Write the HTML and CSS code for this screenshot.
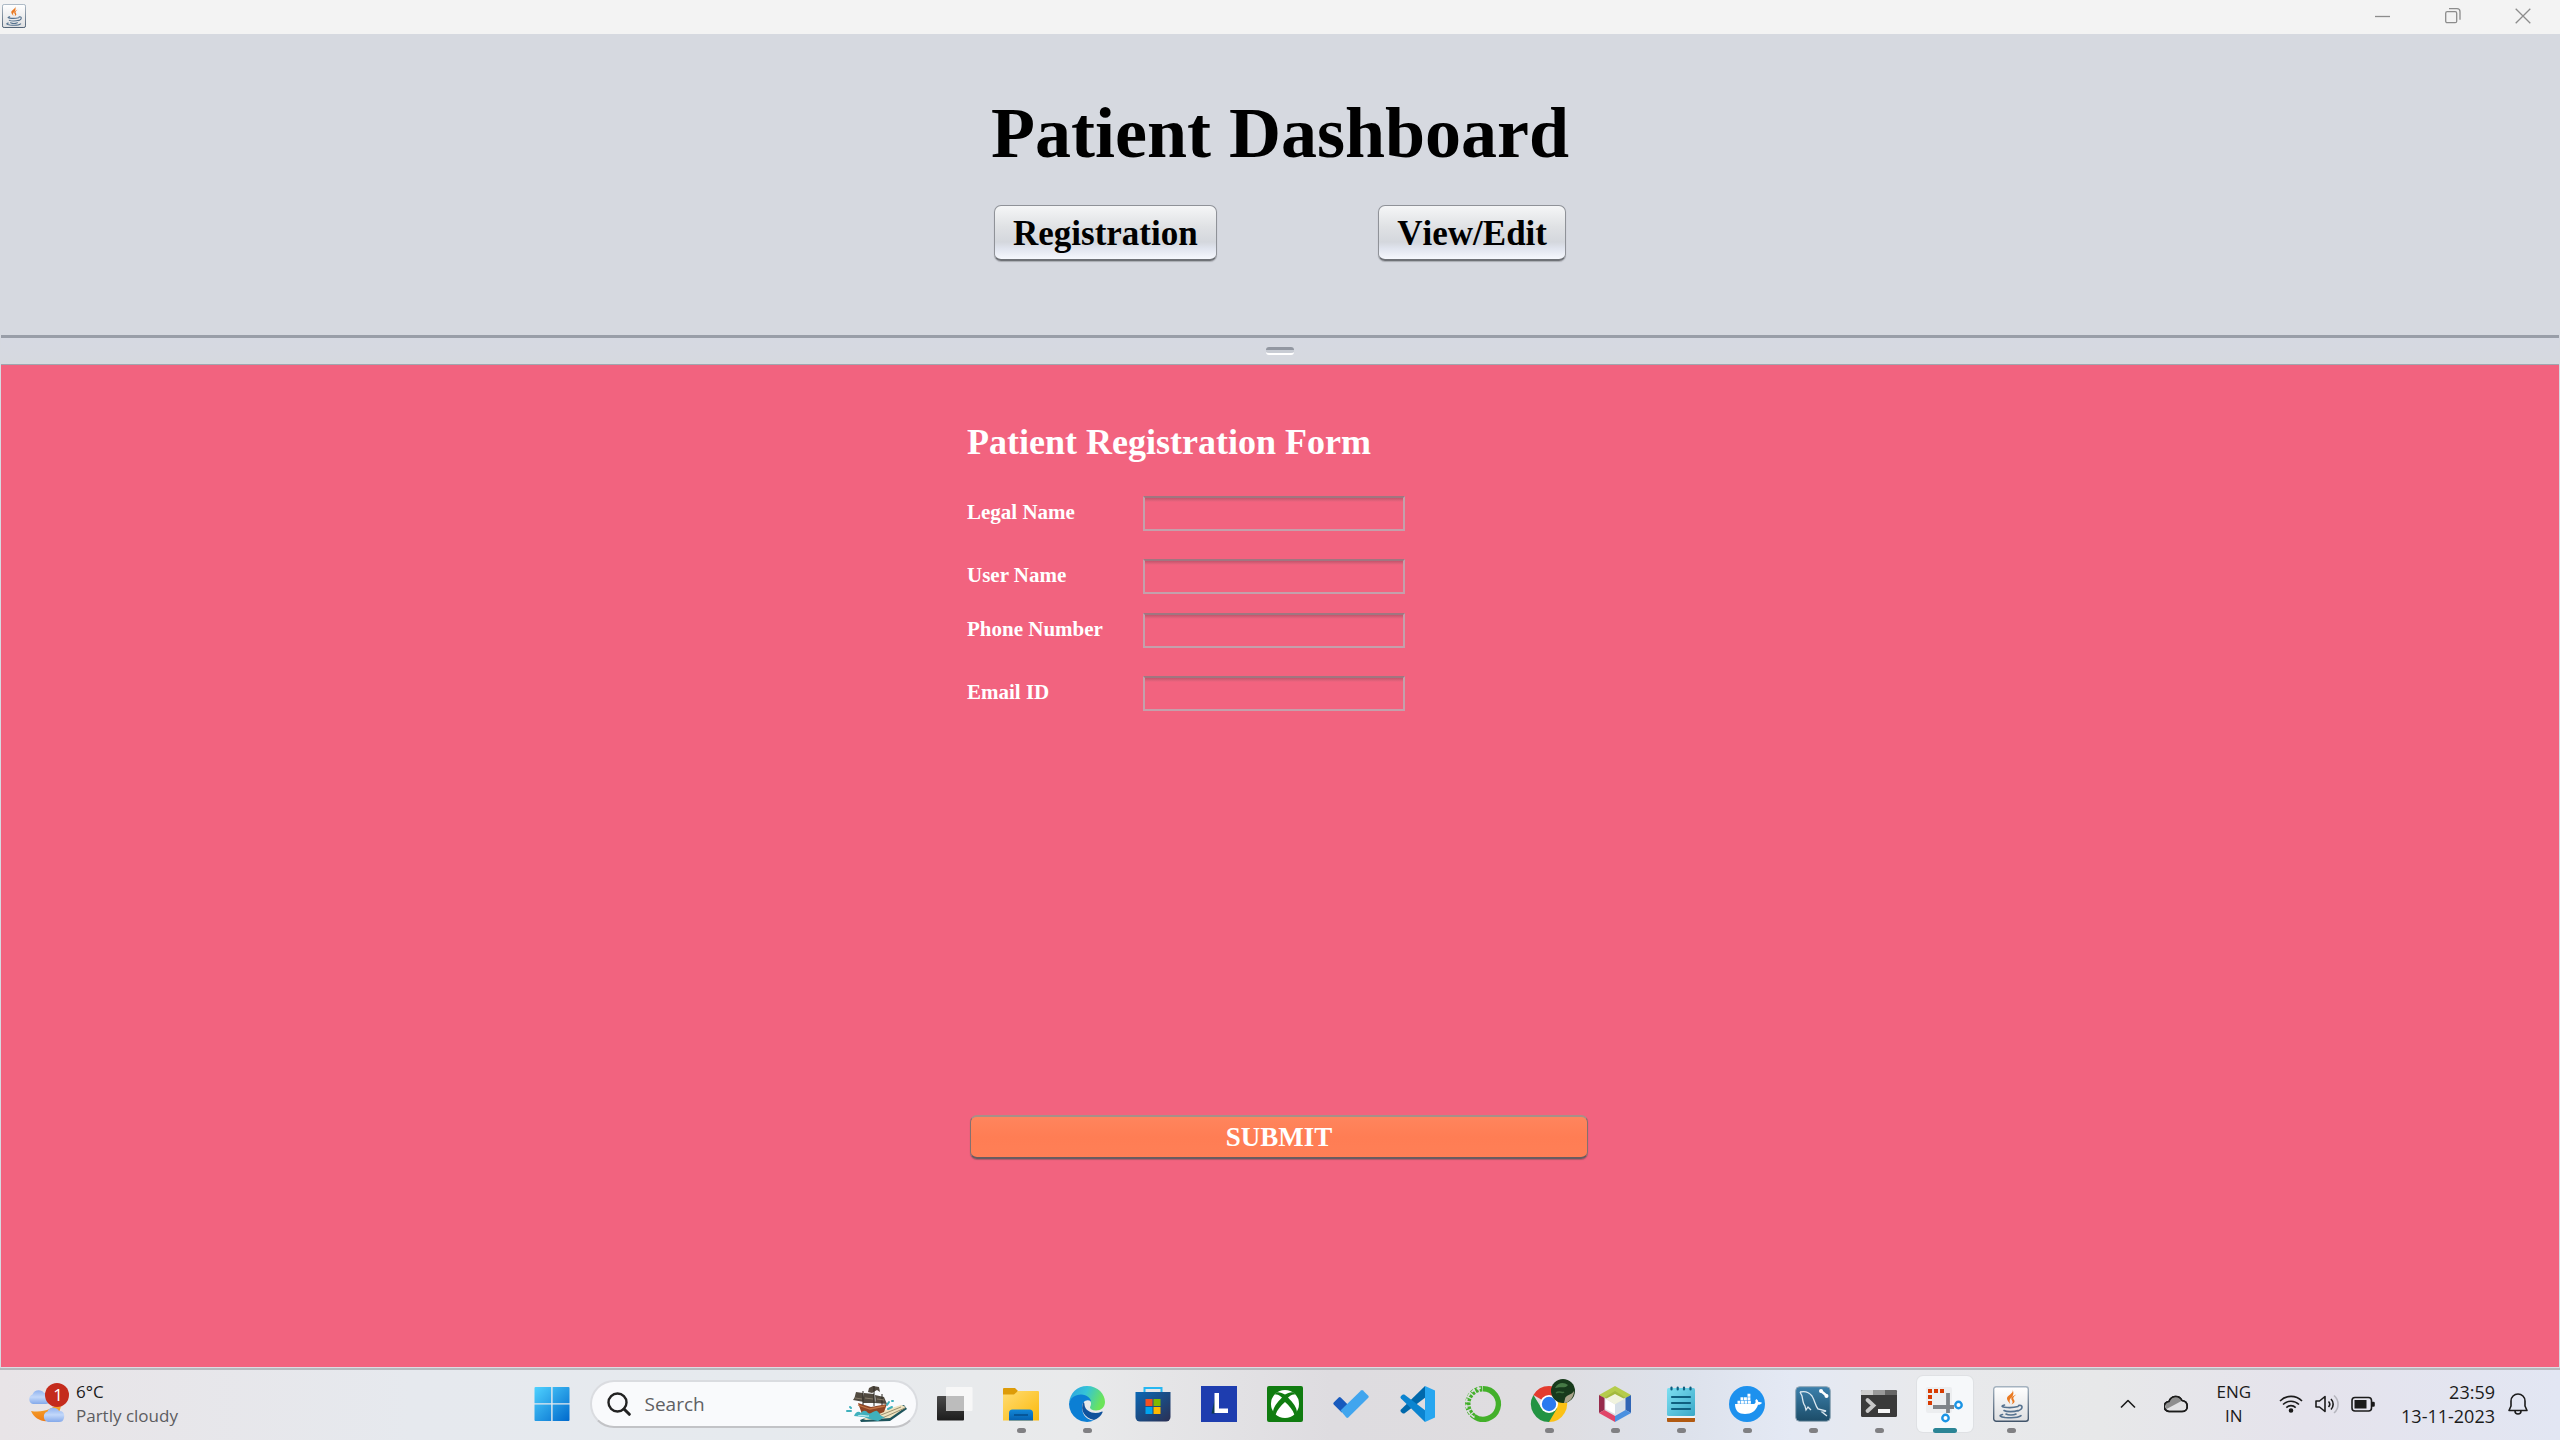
FILE: index.html
```html
<!DOCTYPE html>
<html lang="en">
<head>
<meta charset="utf-8">
<title>Patient Dashboard</title>
<link rel="stylesheet" href="styles.css">
</head>
<body>
<svg width="0" height="0" class="defs" aria-hidden="true">
  <defs>
    <linearGradient id="g-win" x1="0" y1="0" x2="1" y2="1"><stop offset="0" stop-color="#4fd2ff"/><stop offset="1" stop-color="#0069cc"/></linearGradient>
    <linearGradient id="g-dark" x1="0" y1="0" x2="0" y2="1"><stop offset="0" stop-color="#4a4a4a"/><stop offset="1" stop-color="#1c1c1c"/></linearGradient>
    <linearGradient id="g-folder" x1="0" y1="0" x2="1" y2="1"><stop offset="0" stop-color="#ffdc72"/><stop offset="1" stop-color="#fbb90c"/></linearGradient>
    <linearGradient id="g-blue" x1="0" y1="0" x2="0" y2="1"><stop offset="0" stop-color="#1288d8"/><stop offset="1" stop-color="#0661b0"/></linearGradient>
    <linearGradient id="g-edge" x1="0" y1="0" x2="1" y2="0.3"><stop offset="0" stop-color="#2b9fe0"/><stop offset="0.5" stop-color="#35c4d8"/><stop offset="1" stop-color="#6be45a"/></linearGradient>
    <linearGradient id="g-store" x1="0" y1="0" x2="1" y2="1"><stop offset="0" stop-color="#0b68b5"/><stop offset="1" stop-color="#2b2f52"/></linearGradient>
    <linearGradient id="g-cloud" x1="0" y1="0" x2="0" y2="1"><stop offset="0" stop-color="#8fb2ef"/><stop offset="0.5" stop-color="#c3d8fa"/><stop offset="1" stop-color="#84a9ea"/></linearGradient>
    <linearGradient id="g-moon" x1="0" y1="0" x2="0" y2="1"><stop offset="0" stop-color="#f8b432"/><stop offset="1" stop-color="#ee7c18"/></linearGradient>
    <linearGradient id="g-note" x1="0" y1="0" x2="1" y2="1"><stop offset="0" stop-color="#7ee0f2"/><stop offset="1" stop-color="#3aa8c8"/></linearGradient>
    <linearGradient id="g-sql" x1="0" y1="0" x2="0" y2="1"><stop offset="0" stop-color="#3c80ac"/><stop offset="1" stop-color="#1c4c68"/></linearGradient>
    <linearGradient id="g-tile" x1="0" y1="0" x2="0" y2="1"><stop offset="0" stop-color="#ffffff"/><stop offset="1" stop-color="#dedfe1"/></linearGradient>
    <linearGradient id="g-frame" x1="0" y1="0" x2="0" y2="1"><stop offset="0" stop-color="#a5b3c0"/><stop offset="1" stop-color="#42556b"/></linearGradient>
    <symbol id="java" viewBox="0 0 36 36">
      <rect x="0.7" y="0.7" width="34.6" height="34.6" rx="2.5" fill="url(#g-tile)" stroke="url(#g-frame)" stroke-width="1.4"/>
      <path d="M19.5 3.5c2 4-6.500 6-5.500 9.500.4 1.800 2 3 3.200 5-1-3.500-.8-4.500 1.300-6.500 2.200-2.200 2.500-5 1-8zM23.300 8.500c-3.500 1.300-6.300 3.500-4.300 6 .9 1.300.8 2.500-.6 4 3.500-1.500 3.800-3.200 2.300-5-1.200-1.700.3-3.300 2.600-5z" fill="#ea7a22"/>
      <path d="M11.500 19c-3 .8-3.500 1.700 0 2.200 4 .6 10 .3 13.500-.7M11 24.500c2.500 1.500 10 1.500 14 0M13 28c2.500 1.300 7.500 1.200 10 0M25.500 19.500c4-1 5.500 3-.5 5.500M9.500 28.500c-4.500 1-2 2.500 2.500 3 6 .5 13.500.2 16-1.800" fill="none" stroke="#55728f" stroke-width="1.600" stroke-linecap="round"/>
    </symbol>
  </defs>
</svg>

<header class="titlebar">
  <svg class="app-icon" viewBox="0 0 36 36"><use href="#java"/></svg>
  <div class="window-controls">
    <button type="button" aria-label="Minimize"><svg viewBox="0 0 16 16"><path d="M0 8.500h15"/></svg></button>
    <button type="button" aria-label="Restore"><svg viewBox="0 0 16 16"><rect x="0.700" y="3.700" width="11" height="11" rx="1.500"/><path d="M4 .7h8a3 3 0 0 1 3 3v8"/></svg></button>
    <button type="button" aria-label="Close"><svg viewBox="0 0 16 16"><path d="M.7.7l14.600 14.600M15.300.7L.7 15.300"/></svg></button>
  </div>
</header>

<main class="split-pane">
  <section class="dashboard">
    <h1>Patient Dashboard</h1>
    <nav class="actions">
      <button type="button" class="metal">Registration</button>
      <button type="button" class="metal">View/Edit</button>
    </nav>
  </section>
  <div class="divider"><span class="grip"></span></div>
  <section class="registration">
    <form class="form">
      <h2>Patient Registration Form</h2>
      <div class="group">
        <div class="row"><label for="legal">Legal Name</label><input id="legal" type="text"></div>
        <div class="row"><label for="user">User Name</label><input id="user" type="text"></div>
      </div>
      <div class="group">
        <div class="row"><label for="phone">Phone Number</label><input id="phone" type="text"></div>
        <div class="row"><label for="email">Email ID</label><input id="email" type="text"></div>
      </div>
      <button type="button" class="submit">SUBMIT</button>
    </form>
  </section>
</main>

<footer class="taskbar">
  <div class="weather">
    <svg class="weather-icon" viewBox="0 0 42 42">
      <path d="M33 18c1 9-4 17-13 20-7 1-14-3-17-10 12 2 22-2 30-10z" fill="url(#g-moon)"/>
      <path d="M5 21a5 5 0 0 1-.5-9.500C6 6 14 6 16 10c5 0 8 4 6 8-1 2-2 3-4 3z" fill="url(#g-cloud)"/>
      <path d="M20 39a5.500 5.500 0 0 1-.5-10.500C21 23 30 24 31 28c4-.5 6 3 5 7-1 3-2 4-5 4z" fill="url(#g-cloud)"/>
      <circle cx="29" cy="12" r="12" fill="#c42b1c"/>
      <text x="30" y="18" class="badge">1</text>
    </svg>
    <div class="lines"><span>6°C</span><span class="muted">Partly cloudy</span></div>
  </div>

  <div class="apps">
    <button class="app" aria-label="Start"><svg viewBox="0 0 36 36"><path fill="url(#g-win)" d="M1.500 1H17.200V17.200H.5V2a1 1 0 0 1 1-1zM18.600 1H34.500a1 1 0 0 1 1 1V17.200H18.600zM.5 18.600H17.200V35H1.500a1 1 0 0 1-1-1zM18.600 18.600H35.500V34a1 1 0 0 1-1 1H18.600z"/></svg></button>
    <div class="search">
      <svg class="lens" viewBox="0 0 24 24"><circle cx="10.500" cy="10.500" r="9" fill="none" stroke="#222" stroke-width="2.400"/><path d="M17 17l5.300 5.300" stroke="#222" stroke-width="3" stroke-linecap="round"/></svg>
      <input type="search" placeholder="Search" aria-label="Search">
      <svg class="ship" viewBox="0 0 62 38">
        <path d="M14 35l20-8 24-7 3 4-17 12-29 1z" fill="#1e545c"/>
        <path d="M17 34l22-9 16-5 5 2-16 11-24 2z" fill="#efe3c0"/>
        <path d="M30 32l25-10M34 34l25-11" stroke="#9a9070" stroke-width="1"/>
        <path d="M12 18l13 4 16-3-3 8-10 4-12-2z" fill="#8f4525"/>
        <path d="M12 20l12 4 15-3" stroke="#c27545" stroke-width="1.300" fill="none"/>
        <path d="M7 15c2-2 2-5 3-8l7 1 1 9zM17 18c1-4 0-7 1-10l10 1 1 9zM29 18c1-4 0-6 0-8l9 2 3 7zM22 7l1-4 4-2 6 1 1 5-3-2-5 3z" fill="#514a40"/>
        <path d="M17 6v14M28 1v20M36 9v11" stroke="#2f2a25" stroke-width="1"/>
        <path d="M9 13l7 1M19 13l8 1M31 14l7 1" stroke="#867c6b" stroke-width="1"/>
        <path d="M8 31c2-5 5-5 7-3 2-3 5-3 7 0 3 2 6-3 9-2 3 2 3 6 8 6l-7 4-9-2-5-2z" fill="#3fb0bd"/>
        <path d="M12 31c4-2 7 1 11 0" stroke="#b6e8ec" stroke-width="1.300" fill="none"/>
        <path d="M1 26h4M4 22l1 1M41 20l2-3M42 24l4-2M46 16h1" stroke="#3fb0bd" stroke-width="2" stroke-linecap="round"/>
      </svg>
    </div>
    <button class="app" aria-label="Task view"><svg viewBox="0 0 36 36"><rect x="0" y="10" width="27" height="24.500" rx="1" fill="url(#g-dark)"/><rect x="9" y="1" width="26.500" height="24" rx="1" fill="#f7f7f7"/><path d="M9 10h18v15H10a1 1 0 0 1-1-1z" fill="#bcbcbc"/></svg></button>
    <button class="app open" aria-label="File Explorer"><svg viewBox="0 0 36 36"><path d="M0 3a1 1 0 0 1 1-1h11l3 3-3 5H0z" fill="#dd9b08"/><path d="M0 8.500h11L15 5h20a1 1 0 0 1 1 1v28.500H0z" fill="url(#g-folder)"/><path d="M6 34.500V27a3.500 3.500 0 0 1 3.500-3.500h17A3.500 3.500 0 0 1 30 27v7.500z" fill="url(#g-blue)"/><path d="M11 29h14" stroke="#064f8e" stroke-width="1.600"/></svg></button>
    <button class="app open" aria-label="Edge"><svg viewBox="0 0 36 36"><path d="M0 17C1 7 8 0 18 0c11 0 18 8 18 16 0 5-4 8.500-9 8.500-4 0-6-1.500-6-3 0-1 1-1.500 1-4 0-4-4-7.500-9-7.500-6 0-11 3-13 7z" fill="url(#g-edge)"/><path d="M0 18C1 12 6 8.500 12 8.500c6 0 10 4 10 7-4-3-9 0-9 6 0 8 6 13 12 13A18 18 0 0 1 0 18z" fill="#0c7fd4"/><path d="M14.500 16c-4 8 1 16 10.500 18 4-1.500 7-4 8.500-7.500.4-.8-.2-1.200-1-.8-7 3-16 .3-17-6.700 0-1 0-2-1-3z" fill="#10529c"/></svg></button>
    <button class="app" aria-label="Microsoft Store"><svg viewBox="0 0 36 36"><path d="M9.500 8V2h17v6" fill="none" stroke="#26b7f2" stroke-width="2"/><path d="M.5 6h35v25a4.500 4.500 0 0 1-4.500 4.500H5A4.500 4.500 0 0 1 .5 31z" fill="url(#g-store)"/><path d="M10.500 13h7v7h-7z" fill="#f25022"/><path d="M18.500 13h7v7h-7z" fill="#7fba00"/><path d="M10.500 21h7v7h-7z" fill="#00a4ef"/><path d="M18.500 21h7v7h-7z" fill="#ffb900"/></svg></button>
    <button class="app" aria-label="L"><svg viewBox="0 0 36 36"><path d="M0 0h36v36H0z" fill="#1e3daf"/><path d="M14 12l-3.500 15.500 4 0 2-6z" fill="#0c3a50"/><path d="M13.500 7h4.500v15.500h9V27H13.500z" fill="#fff"/></svg></button>
    <button class="app" aria-label="Xbox"><svg viewBox="0 0 36 36"><rect width="36" height="36" rx="2" fill="#107c10"/><circle cx="18" cy="18" r="14" fill="#fff"/><path d="M9 6.500c3-1 6 .3 9 2 3-1.700 6-3 9-2l1 2c-3-.5-5 1-7 3 5 5 9 10 9 15l-2.500 2.500C26 24 22 19.500 18 16c-4 3.500-8 8-9.500 13L6 26.500c0-5 4-10 9-15-2-2-4-3.500-7-3z" fill="#107c10"/></svg></button>
    <button class="app" aria-label="To Do"><svg viewBox="0 0 36 36"><path d="M.7 16.500l5-5a1.500 1.500 0 0 1 2 0l7 7-6 8-8-8a1.500 1.500 0 0 1 0-2z" fill="#185abd"/><path d="M7.500 24.500L28 4.500a1.500 1.500 0 0 1 2 0l5.300 5.300a1.500 1.500 0 0 1 0 2L15.300 31.500a1.500 1.500 0 0 1-2 0z" fill="#41a5ee"/></svg></button>
    <button class="app" aria-label="Visual Studio Code"><svg viewBox="0 0 36 36"><path d="M26 0L2 23.500a1.800 1.800 0 0 0 0 2.500l1.500 1.200c.8.500 1.500.5 2.200 0L27 11z" fill="#0068ab"/><path d="M26 36L2 12.500A1.800 1.800 0 0 1 2 10l1.500-1.200c.8-.5 1.500-.5 2.200 0L27 25z" fill="#0b84d0"/><path d="M26 0l10 4.500v27L26 36z" fill="#27a6f0"/></svg></button>
    <button class="app" aria-label="Anaconda"><svg viewBox="0 0 36 36"><path d="M18 2.700a15.300 15.300 0 1 1-9 27.600" fill="none" stroke="#43b02a" stroke-width="5.400"/><path d="M9 30.300A15.300 15.300 0 0 1 18 2.700" fill="none" stroke="#43b02a" stroke-width="5.400" stroke-dasharray="3 1.300"/><path d="M9.500 31.500A15.700 15.700 0 0 1 17 2" fill="none" stroke="#dedde0" stroke-width="1.700" stroke-dasharray="4 2"/></svg></button>
    <button class="app open" aria-label="Chrome"><svg viewBox="0 0 36 36"><path d="M18 18L2.400 9A18 18 0 0 1 33.600 9z" fill="#e33b2e"/><path d="M18 18L33.600 9A18 18 0 0 1 18 36z" fill="#fbc116"/><path d="M18 18l8 4.500L18 36A18 18 0 0 1 2.400 9l8 13z" fill="#229342"/><circle cx="18" cy="18" r="9" fill="#fff"/><circle cx="18" cy="18" r="7.200" fill="#2a7af0"/><circle cx="32" cy="5" r="12" fill="#173a1b"/><path d="M24 2c3-6 9-6 13-3-3 4-7 1-13 3z" fill="#467a45"/><path d="M43 5c-2 4-9 4-9 8l-1 4c5-.5 10-5 10-12z" fill="#aaa48b"/><path d="M25 7c4-3 6 1 8-1" stroke="#3d6d3c" stroke-width="1.500" fill="none"/></svg></button>
    <button class="app open" aria-label="NetBeans"><svg viewBox="0 0 36 36"><path d="M18 0l16 9-5 3-11-6-11 6-5-3z" fill="#b5cc4b"/><path d="M18 5l10.500 6.500L18 18 7.500 11.500z" fill="#a3ba3e"/><path d="M2 9l5.500 3v12L2 27z" fill="#972b4c"/><path d="M34 9l-5.500 3v12l5.500 3z" fill="#2f65b5"/><path d="M2 27l5.500-3L18 30v6z" fill="#e04468"/><path d="M34 27l-5.500-3L18 30v6z" fill="#4a90e0"/><path d="M18 8l9.500 5L18 18.500 8.500 13z" fill="#f0f3de"/><path d="M8.500 13l9.500 5.500V28l-9.500-5z" fill="#fff"/><path d="M27.500 13L18 18.500V28l9.500-5z" fill="#d5dfe8"/></svg></button>
    <button class="app open" aria-label="Notepad"><svg viewBox="0 0 36 36"><path d="M4 31h28v4a1 1 0 0 1-1 1H5a1 1 0 0 1-1-1z" fill="#b15a12"/><path d="M4 29h28v3H4z" fill="#f2f2f2"/><rect x="4" y="2" width="28" height="28" rx="1.500" fill="url(#g-note)"/><path d="M9 11h18M9 17h18M9 23h18M8.500 1.500v2M14.700 1.500v2M21 1.500v2M27.500 1.500v2" stroke="#0f5f80" stroke-width="2.200" stroke-linecap="round"/></svg></button>
    <button class="app open" aria-label="Docker"><svg viewBox="0 0 36 36"><circle cx="18" cy="18" r="18" fill="#1d91ee"/><path d="M6 18h19c1.500-.5 2-1.500 1.300-3.500l1-1.500c1.500 1 2 2 2 3 1.500-.3 2.700 0 3.700.8-.8 1.500-2.300 2-4 2C27 25 22.500 28 16 28c-6 0-10-3-10-10z" fill="#fff"/><path d="M8.500 16.200h13.800M11.500 12.700h10.500M18.500 9.200h3.500" stroke="#fff" stroke-width="2.900" stroke-dasharray="2.900 .6"/></svg></button>
    <button class="app open" aria-label="MySQL Workbench"><svg viewBox="0 0 36 36"><rect x=".7" y=".7" width="34.600" height="34.600" rx="4" fill="url(#g-sql)" stroke="#8fa5b5" stroke-width="1"/><path d="M5 6c4-1 9 0 12 4 3 5 3 9 6 13l8 2-4 1 5 4M5 6l2 4c1 5 1 8 3 10l1 4 2-3 3 3" fill="none" stroke="#dbe8f0" stroke-width="1.300"/><path d="M26 5l6 5" stroke="#fff" stroke-width="2.500"/><circle cx="26" cy="5" r="2" fill="#fff"/><circle cx="31.500" cy="10" r="2" fill="#fff"/></svg></button>
    <button class="app open" aria-label="Terminal"><svg viewBox="0 0 36 36"><rect y="4" width="36" height="27" rx="1.500" fill="#3a3a3a"/><path d="M0 9V5.500A1.500 1.500 0 0 1 1.500 4H12v5z" fill="#cdcdcd"/><path d="M12 4h12v5H12z" fill="#999"/><path d="M24 4h10.500A1.500 1.500 0 0 1 36 5.500V9H24z" fill="#666"/><path d="M6.500 14l6 5.500-6 5.500" fill="none" stroke="#c8c8c8" stroke-width="3.800" stroke-linecap="round"/><rect x="17" y="23" width="12" height="4" fill="#f5f5f5"/></svg></button>
    <button class="app open active" aria-label="Snipping Tool"><svg viewBox="0 0 36 36"><rect x="-1" y="1" width="26" height="26" rx="2" fill="#eceef0"/><path d="M3 19V5h14.500" fill="none" stroke="#d83b01" stroke-width="4" stroke-dasharray="4 2"/><path d="M21 7v20M6 21h21" stroke="#7f8489" stroke-width="3.800"/><circle cx="31.500" cy="19" r="3.200" fill="#fff" stroke="#1b94e4" stroke-width="2.400"/><circle cx="18.500" cy="32" r="3.200" fill="#fff" stroke="#1b94e4" stroke-width="2.400"/></svg></button>
    <button class="app open" aria-label="Java"><svg viewBox="0 0 36 36"><use href="#java"/></svg></button>
  </div>

  <div class="tray">
    <svg class="chevron" viewBox="0 0 16 24"><path d="M1 15.500l7-7 7 7"/></svg>
    <svg class="glyph" viewBox="0 0 24 24"><path d="M5.500 19.500a5 5 0 0 1-.5-10C7 3.500 15 2.500 18 8.500c7 1 7 11 0 11z" fill="#e2e2e4"/><path d="M5.500 9.500C8 3.500 15 3.500 17.500 9L11 12.500 2.500 17C0 13 2 10 5.500 9.500z" fill="#8e8e8e" stroke="none"/><path d="M5.500 19.500a5 5 0 0 1-.5-10C7 3.500 15 2.500 18 8.500c7 1 7 11 0 11z"/></svg>
    <div class="lines middle"><span>ENG</span><span>IN</span></div>
    <div class="status">
      <svg class="glyph" viewBox="0 0 24 24"><path d="M1 9a15.500 15.500 0 0 1 22 0M4 12.500a11.300 11.300 0 0 1 16 0M7.300 15.600a6.700 6.700 0 0 1 9.400 0"/><circle cx="12" cy="18.500" r="1.500" fill="#1b1b1b"/></svg>
      <svg class="glyph" viewBox="0 0 24 24"><path d="M1 9h3.500L10 4.500v15L4.500 15H1zM13.500 9.500a4 4 0 0 1 0 5.500M16 7a7.500 7.500 0 0 1 0 10.500"/><path d="M19 3.500a11.500 11.500 0 0 1 0 17.500" class="faint"/></svg>
      <svg class="glyph" viewBox="0 0 24 24"><rect x="1" y="5.500" width="19.500" height="13.500" rx="3"/><rect x="3.500" y="8" width="12" height="8.500" fill="#1b1b1b" stroke="none"/><path d="M21 10.500h1.500q.5 0 .5.500v2.500q0 .5-.5.500H21z" fill="#1b1b1b"/></svg>
    </div>
    <div class="clock">
      <div class="lines end"><span>23:59</span><span>13-11-2023</span></div>
      <svg class="bell" viewBox="0 0 20 24"><path d="M1 18.500l2-4.500V9a7 7 0 0 1 14 0v5l2 4.500zM7 19a3 3 0 0 0 6 0"/></svg>
    </div>
  </div>
</footer>
</body>
</html>
```
FILE: styles.css
```css
* { box-sizing: border-box; }

body {
  margin: 0;
  min-height: 100vh;
  display: flex;
  flex-direction: column;
  background: #d6d9e0;
  font-family: "Liberation Serif", "Times New Roman", serif;
}

button, input { font: inherit; }
h1, h2 { margin: 0; font-weight: bold; }
.defs { position: absolute; }

/* Window title bar */
.titlebar {
  height: 34px;
  display: flex;
  align-items: center;
  justify-content: space-between;
  padding: 0 2px 2px;
  background: #f3f3f3;
}
.app-icon { width: 24px; height: 24px; }
.window-controls { display: flex; }
.window-controls button {
  width: 70px;
  height: 32px;
  display: grid;
  place-items: center;
  padding: 0;
  border: 0;
  background: none;
}
.window-controls svg {
  width: 16px;
  height: 16px;
  fill: none;
  stroke: #8c8c8c;
  stroke-width: 1.3;
}

/* Split pane */
.split-pane {
  flex: 1;
  display: flex;
  flex-direction: column;
}
.dashboard {
  display: flex;
  flex-direction: column;
  align-items: center;
  gap: 32px;
  padding: 59px 0 74px;
}
.dashboard h1 {
  font-size: 72px;
  line-height: 80px;
}
.actions {
  width: 572px;
  display: flex;
  justify-content: space-between;
}
.metal {
  height: 56px;
  padding: 2px 18px 0;
  border: 1px solid #8f9298;
  border-bottom: 2px solid #6f7277;
  border-radius: 7px;
  background: linear-gradient(#f5f6f7, #dfe1e4 40%, #d4d7dd 68%, #e0e4ee 80%, #f6f8fd);
  box-shadow: 0 1px 1px #a9acb2;
  color: #000;
  font-size: 35px;
  font-weight: bold;
  font-kerning: none;
}
.divider {
  height: 30px;
  margin: 0 1px;
  display: flex;
  justify-content: center;
  padding-top: 9px;
  border-top: 3px solid #999ea8;
  border-bottom: 1px solid #a0a5ae;
  background: linear-gradient(#d6d9e2, #d6d9df);
}
.grip {
  width: 28px;
  height: 8px;
  border-top: 3px solid #9297a1;
  border-bottom: 2px solid #fff;
  border-radius: 3px;
  background: #c8ccd4;
}

/* Registration form */
.registration {
  flex: 1;
  padding: 56px 0;
  margin: 0 1px;
  border-bottom: 1px solid #dcdde2;
  background: #f2637f;
}
.form {
  width: 626px;
  margin: 0 auto;
  color: #fff;
}
.form h2 {
  margin-bottom: 33px;
  font-size: 36px;
  line-height: 42px;
}
.group {
  display: grid;
  gap: 28px;
  margin-bottom: 19px;
}
.row {
  display: grid;
  grid-template-columns: 176px 262px;
}
.row label {
  font-size: 21px;
  line-height: 32px;
  font-weight: bold;
}
.row input {
  height: 35px;
  padding: 0 8px;
  border: 2px solid #c4a0ab;
  border-top-color: #a07680;
  border-radius: 0;
  outline: 0;
  background: linear-gradient(#c4546c, #e5637c 3px, transparent 4px);
  color: #fff;
  font-size: 21px;
}
.submit {
  width: 618px;
  height: 44px;
  display: block;
  margin: 404px 0 0 3px;
  padding: 0;
  border: 1px solid #85706f;
  border-top: 2px solid #a89088;
  border-bottom: 2px solid #6a5c60;
  border-radius: 7px;
  background: linear-gradient(#ff855d, #ff7d54 50%, #ff7f56);
  box-shadow: 0 1px 1px #b05868;
  color: #fff;
  font-size: 27px;
  font-weight: bold;
}

/* Taskbar */
.taskbar {
  height: 72px;
  display: grid;
  grid-template-columns: 1fr auto 1fr;
  align-items: center;
  padding-bottom: 2px;
  border-top: 2px solid #b7b8bd;
  background: linear-gradient(90deg, #e8e4e7, #e6e9ee 16%, #e6eaee 30%, #e9eaeb 42%, #dedce0 52%, #dfdde0 60%, #dde2ec 66%, #e4e9f4 70%, #e8e9ec 75%, #e7e8e9 82%, #e5e3ec 90%, #e2e6f3);
  color: #1b1b1b;
  font-family: "Open Sans", "Noto Sans", sans-serif;
  font-size: 17px;
}
.weather {
  display: flex;
  align-items: center;
  gap: 6px;
  padding-left: 28px;
}
.weather-icon {
  width: 42px;
  height: 42px;
}
.badge {
  fill: #fff;
  font-size: 17px;
  text-anchor: middle;
}
.lines {
  display: flex;
  flex-direction: column;
  line-height: 24px;
  white-space: nowrap;
}
.middle { align-items: center; }
.end {
  align-items: flex-end;
  font-size: 18px;
}
.muted { color: #5c5c60; }

.apps {
  display: flex;
  align-items: center;
  padding-left: 2px;
}
.app {
  width: 56px;
  height: 56px;
  position: relative;
  display: grid;
  place-items: center;
  margin: 0 5px;
  padding: 0;
  border: 0;
  border-radius: 6px;
  background: none;
}
.app svg {
  width: 36px;
  height: 36px;
  overflow: visible;
}
.app.open::after {
  content: "";
  position: absolute;
  bottom: -1px;
  left: calc(50% - 4px);
  width: 9px;
  height: 5px;
  border-radius: 3px;
  background: #808083;
}
.app.active {
  background: #f6f8fa;
  box-shadow: 0 0 0 1px #dfe1e4;
}
.app.active::after {
  left: calc(50% - 12px);
  width: 24px;
  background: #2b8595;
}
.search {
  width: 328px;
  height: 48px;
  display: flex;
  align-items: center;
  margin: 0 4px 0 5px;
  padding: 0 8px 0 15px;
  border: 2px solid #dadce0;
  border-bottom-color: #c2c3c6;
  border-radius: 24px;
  background: #f9fafc;
}
.lens {
  width: 24px;
  height: 24px;
}
.search input {
  flex: 1;
  min-width: 0;
  margin-left: 14px;
  padding: 0;
  border: 0;
  outline: 0;
  background: none;
  color: #1b1b1b;
  font-size: 19px;
}
.search input::placeholder { color: #5f6063; opacity: 1; }
.ship {
  width: 62px;
  height: 38px;
}

.tray {
  display: flex;
  align-items: center;
  justify-content: flex-end;
  gap: 28px;
  padding-right: 32px;
}
.tray svg {
  height: 24px;
  fill: none;
  stroke: #1b1b1b;
  stroke-width: 1.6;
  stroke-linejoin: round;
}
.chevron { width: 16px; }
.glyph { width: 24px; }
.bell { width: 20px; }
.tray .faint { stroke: #b5b5bd; }
.status {
  display: flex;
  gap: 12px;
}
.clock {
  display: flex;
  align-items: center;
  gap: 13px;
}
.tray .clock { margin-left: -2px; }
```
